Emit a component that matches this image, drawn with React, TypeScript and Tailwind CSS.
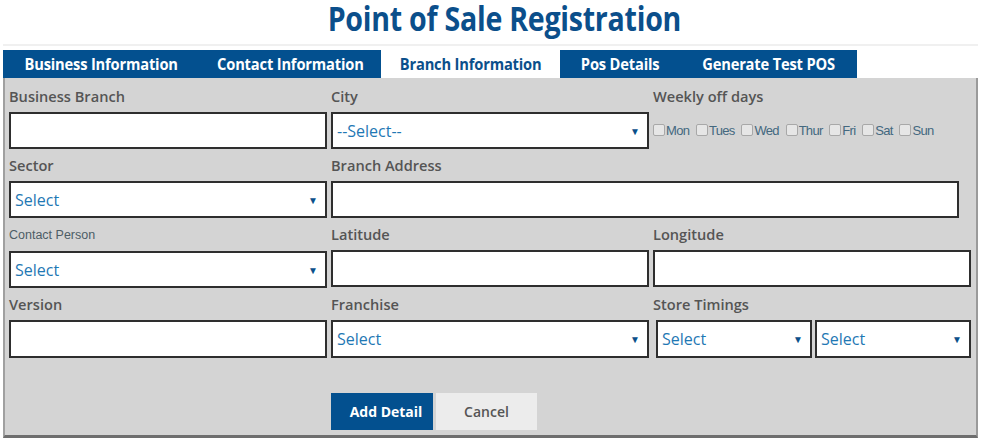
import React from "react";

const tabs = [
  { name: "Business Information", w: "w-[197px]" },
  { name: "Contact Information", w: "w-[181px]" },
  { name: "Branch Information", w: "w-[179px]", active: true },
  { name: "Pos Details", w: "w-[120px]" },
  { name: "Generate Test POS", w: "w-[177px]" },
];

const days = ["Mon", "Tues", "Wed", "Thur", "Fri", "Sat", "Sun"];

function Label({ children, small }: { children: React.ReactNode; small?: boolean }) {
  return (
    <div
      className={
        small
          ? "h-[33px] flex items-center pt-[2px] text-[12.5px] text-[#4d5d66] font-['Liberation_Sans',Arial,sans-serif]"
          : "h-[32px] flex items-center pt-[1px] text-[14.6px] font-semibold text-[#555] font-['Open_Sans',sans-serif]"
      }
    >
      {children}
    </div>
  );
}

function Input({ className = "" }: { className?: string }) {
  return <div className={"h-[37px] border-2 border-[#2e2e2e] bg-white " + className} />;
}

function Select({ text = "Select", className = "" }: { text?: string; className?: string }) {
  return (
    <div
      className={
        "h-[37px] border-2 border-[#2e2e2e] bg-white flex items-center justify-between pl-[4px] pr-[7px] " +
        className
      }
    >
      <span className="text-[16px] text-[#1f78b4] font-['Open_Sans',sans-serif]">{text}</span>
      <span className="text-[10px] text-[#0b4f8a] leading-none">▼</span>
    </div>
  );
}

export default function App() {
  return (
    <div className="w-[981px] h-[441px] bg-white overflow-hidden">
      <div className="h-[44px] flex justify-center pl-[28px]">
        <h1 className="inline-block h-[40px] scale-x-[0.84] text-[34px] leading-[36px] font-bold text-[#0b4f8b] font-['Open_Sans',sans-serif] tracking-[-0.3px] whitespace-nowrap">
          Point of Sale Registration
        </h1>
      </div>
      <div className="ml-[3px] w-[975px] h-[2px] bg-[#f0f0f0]" />
      <div className="flex pl-[3px] mt-[4px] h-[28px]">
        {tabs.map((t) => (
          <div
            key={t.name}
            className={
              "flex items-center justify-center " +
              t.w +
              (t.active ? " bg-white text-[#0b4f8b]" : " bg-[#03508f] text-white")
            }
          >
            <span className="inline-block scale-x-[0.89] whitespace-nowrap text-[16.5px] font-bold font-['Open_Sans',sans-serif] tracking-[-0.2px]">
              {t.name}
            </span>
          </div>
        ))}
      </div>
      <div className="ml-[3px] w-[975px] h-[360px] bg-[#d4d4d4] border-l-2 border-r-2 border-b-[3px] border-l-[#a0a0a0] border-r-[#9a9a9a] border-b-[#6e6e6e] pl-[4px] pr-[5px] pt-[2px]">
        <div className="grid grid-cols-3 gap-x-[4px]">
          {/* row 1 */}
          <div>
            <Label>Business Branch</Label>
            <Input />
          </div>
          <div>
            <Label>City</Label>
            <Select text="--Select--" />
          </div>
          <div>
            <Label>Weekly off days</Label>
            <div className="h-[37px] flex items-center pt-[1px] gap-[6.8px]">
              {days.map((d) => (
                <div key={d} className="flex items-center">
                  <span className="w-[12px] h-[12px] border border-[#a8a8a8] rounded-[2px] bg-[#e6e6e6] mr-[1px] mt-[-2px]" />
                  <span className="text-[13px] text-[#43687f] font-['Liberation_Sans',Arial,sans-serif] tracking-[-0.7px]">
                    {d}
                  </span>
                </div>
              ))}
            </div>
          </div>

          {/* row 2 */}
          <div>
            <Label>Sector</Label>
            <Select />
          </div>
          <div className="col-span-2">
            <Label>Branch Address</Label>
            <Input className="w-[628px]" />
          </div>

          {/* row 3 */}
          <div>
            <Label small>Contact Person</Label>
            <Select />
          </div>
          <div>
            <Label>Latitude</Label>
            <Input />
          </div>
          <div>
            <Label>Longitude</Label>
            <Input />
          </div>

          {/* row 4 */}
          <div>
            <Label>Version</Label>
            <Input className="h-[38px]" />
          </div>
          <div>
            <Label>Franchise</Label>
            <Select className="h-[38px]" />
          </div>
          <div>
            <Label>Store Timings</Label>
            <div className="flex gap-[3px] pl-[3px]">
              <Select className="h-[38px] flex-1" />
              <Select className="h-[38px] flex-1" />
            </div>
          </div>

          {/* buttons */}
          <div />
          <div className="flex gap-[3px] mt-[35px]">
            <button className="w-[102px] h-[37px] bg-[#03508f] text-white text-[14px] font-bold font-['Open_Sans',sans-serif] pl-[8px]">
              Add Detail
            </button>
            <button className="w-[101px] h-[37px] bg-[#ececec] text-[#555] text-[14px] font-semibold font-['Open_Sans',sans-serif]">
              Cancel
            </button>
          </div>
        </div>
      </div>
    </div>
  );
}
